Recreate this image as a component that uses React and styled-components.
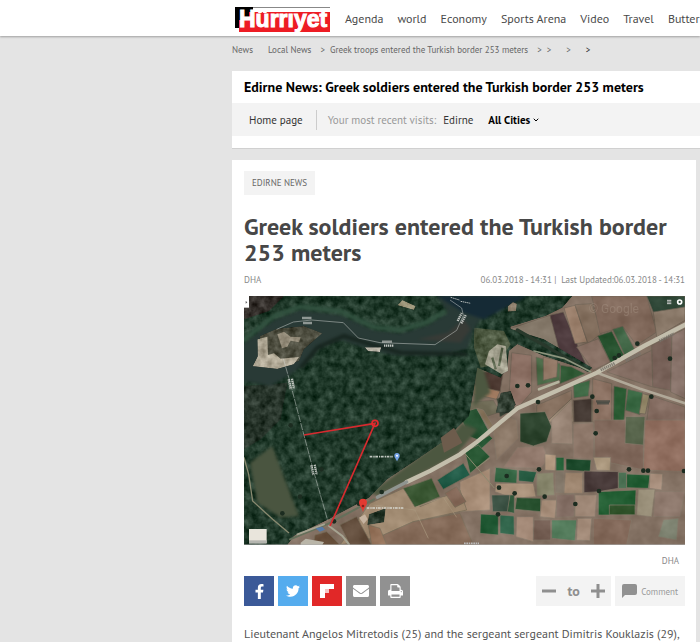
import React from 'react'
import styled, { createGlobalStyle } from 'styled-components'
import { FaFacebookF, FaTwitter, FaEnvelope } from 'react-icons/fa'
import { ChevronDown } from 'lucide-react'

const GlobalStyle = createGlobalStyle`
  * {
    box-sizing: border-box;
  }
  body {
    margin: 0;
    background: #e4e4e4;
    color: #4a4a4a;
    font-family: 'PT Sans', 'Noto Sans', sans-serif;
    overflow: hidden;
  }
  a {
    color: inherit;
    text-decoration: none;
  }
  button {
    border: 0;
    padding: 0;
    background: none;
    color: inherit;
    font: inherit;
    cursor: pointer;
  }
`

const Header = styled.header`
  height: 36px;
  padding-left: 235px;
  background: #fff;
  box-shadow: 0 1px 2px rgba(0, 0, 0, 0.3);
  overflow: hidden;
`

const Nav = styled.nav`
  display: flex;
  align-items: center;
  height: 36px;
  gap: 14px;
  font-size: 12px;
  white-space: nowrap;
`

const LogoLink = styled.a`
  display: flex;
  padding-top: 3px;
`

const Main = styled.main`
  padding-left: 232px;
`

const Breadcrumb = styled.nav`
  display: flex;
  align-items: center;
  height: 27px;
  margin-bottom: 8px;
  gap: 5px;
  font-size: 9px;
  color: #666;
  white-space: nowrap;
`

const Crumb = styled.a`
  margin-right: ${({ $wide }) => ($wide ? 10 : 4)}px;
`

const Arrow = styled.span`
  margin-right: ${({ $wide }) => ($wide ? 10 : 0)}px;
  color: ${({ $dark }) => ($dark ? '#222' : '#666')};
`

const CityCard = styled.section`
  margin-bottom: 11px;
  padding-bottom: 12px;
  border-bottom: 1px solid #d0d0d0;
  background: #fff;
`

const CityTitle = styled.h2`
  margin: 0;
  padding: 0 12px;
  font-size: 14px;
  line-height: 32px;
  color: #000;
  white-space: nowrap;
`

const CityBar = styled.div`
  display: flex;
  align-items: center;
  height: 33px;
  padding-left: 17px;
  background: #f3f3f3;
  font-size: 11px;
  color: #333;
  white-space: nowrap;
`

const HomeLink = styled.a`
  margin-right: 11px;
  padding-right: 13px;
  border-right: 1px solid #ccc;
  line-height: 20px;
`

const Visits = styled.span`
  margin-right: 7px;
  color: #999;
`

const CitiesButton = styled.button`
  display: flex;
  align-items: center;
  gap: 2px;
  margin-left: 15px;
  font-weight: 700;
  color: #000;
`

const Article = styled.article`
  margin-right: 4px;
  padding: 11px 11px 20px 12px;
  background: #fff;
`

const Tag = styled.a`
  display: block;
  width: fit-content;
  padding: 0 8px;
  background: #f3f3f3;
  font-size: 9px;
  line-height: 24px;
  color: #666;
`

const Headline = styled.h1`
  margin: 19px 0 7px;
  font-size: 24px;
  line-height: 26px;
  color: #474747;
`

const Meta = styled.div`
  display: flex;
  justify-content: space-between;
  margin-bottom: 9px;
  font-size: 9px;
  line-height: 14px;
  color: #888;
`

const Figure = styled.figure`
  margin: 0;
  svg {
    display: block;
    width: 100%;
    height: auto;
  }
`

const Caption = styled.figcaption`
  padding: 8px 6px;
  font-size: 9px;
  line-height: 15px;
  text-align: right;
  color: #888;
`

const Tools = styled.div`
  display: flex;
  justify-content: space-between;
`

const ToolGroup = styled.div`
  display: flex;
  gap: 4px;
`

const ShareButton = styled.button`
  display: flex;
  align-items: center;
  justify-content: center;
  width: 30px;
  height: 30px;
  background: ${({ $bg }) => $bg};
  color: #fff;
`

const SizeBox = styled.div`
  display: flex;
  align-items: center;
  justify-content: space-between;
  width: 75px;
  height: 30px;
  padding: 0 6px;
  background: #f3f3f3;
  font-size: 14px;
  font-weight: 700;
  color: #8f8f8f;
  button {
    display: flex;
  }
`

const CommentButton = styled.button`
  display: flex;
  align-items: center;
  gap: 4px;
  height: 30px;
  padding: 0 7px;
  background: #f3f3f3;
  font-size: 9px;
  color: #999;
`

const Paragraph = styled.p`
  margin: 18px 0 0;
  font-size: 12px;
  line-height: 20px;
  color: #555;
`

const Logo = () => (
  <svg width="96" height="26" viewBox="0 0 96 26" role="img" aria-label="Hürriyet">
    <path d="M18 .5h77" stroke="#888" />
    <path d="M4 5h91v20H4z" fill="#ed1c24" />
    <path d="M0 0h18v5h-4v8H4v8H0z" fill="#000" />
    <text
      x="4"
      y="20"
      fill="#fff"
      stroke="#fff"
      strokeWidth="1"
      fontFamily="Liberation Sans, sans-serif"
      fontWeight="700"
      fontSize="23"
    >
      Hürriyet
    </text>
  </svg>
)

const FlipboardIcon = () => (
  <svg width="14" height="14" viewBox="0 0 14 14">
    <path d="M0 0h5v14H0z" fill="#fff" />
    <path d="M5 0h9v5H5z" fill="#fff" />
    <path d="M5 5h4v4H5z" fill="#f7c4c4" />
  </svg>
)

const PrintIcon = () => (
  <svg width="15" height="14" viewBox="0 0 1664 1536" fill="#fff">
    <path d="M384 1408h896v-256H384v256zm0-640h896V384h-160q-40 0-68-28t-28-68V128H384v640zm1152 64q0-26-19-45t-45-19-45 19-19 45 19 45 45 19 45-19 19-45zm128 0v416q0 13-9.500 22.500t-22.500 9.500h-224v160q0 40-28 68t-68 28H352q-40 0-68-28t-28-68v-160H32q-13 0-22.500-9.500T0 1248V832q0-79 56.500-135.500T192 640h64V96q0-40 28-68t68-28h672q40 0 88 20t76 48l152 152q28 28 48 76t20 88v256h64q79 0 135.500 56.500T1664 832z" />
  </svg>
)

const fields = [
  // north of the crossroads
  ['#85796a', '150,110 270,70 305,180 270,185'],
  ['#4b383b', '270,70 310,60 385,235 300,185'],
  ['#9b806c', '312,48 345,40 382,150 345,155'],
  ['#84705f', '345,38 395,35 430,120 384,155'],
  ['#80685a', '395,12 560,12 590,120 530,160 490,105 420,125'],
  ['#8c7b6b', '580,60 675,30 675,85 590,135'],
  ['#2c4434', '560,12 675,12 675,45 580,60'],
  ['#877064', '350,165 415,140 450,210 400,235'],
  ['#285330', '413,132 455,118 495,196 452,212'],
  ['#426747', '458,112 488,103 528,180 496,194'],
  ['#786259', '575,160 635,130 632,295 578,285'],
  ['#88736a', '636,130 675,110 675,320 632,300'],
  ['#826c61', '440,240 575,175 578,285'],
  ['#8c7064', '155,182 215,190 215,300 180,340 145,345'],
  ['#4e6c4a', '228,195 300,215 300,265 232,280'],
  ['#927866', '250,195 293,205 290,255 250,265'],
  ['#4f3c34', '50,240 130,240 120,300 42,280'],
  ['#a17b61', '42,280 120,298 110,322 42,306'],
  ['#315a36', '302,220 335,225 375,245 300,275'],
  ['#86705f', '230,340 335,295 335,320 260,390 230,390'],
  ['#9c8873', '335,320 340,390 260,390'],
  ['#3f6945', '340,278 390,265 385,312 342,318'],
  ['#453a34', '340,325 395,320 395,390 342,390'],
  ['#8b7162', '398,260 455,275 455,390 398,390'],
  ['#2d5d35', '462,282 500,290 490,412 460,412'],
  ['#3c6a45', '504,292 548,302 540,368 496,355'],
  ['#94886a', '548,305 568,310 556,366 538,364'],
  ['#846c61', '570,310 675,345 675,390 560,390'],
  ['#6e6a55', '30,330 100,325 120,360 30,390'],
  ['#333e31', '110,320 155,305 165,350 120,375'],
]

const lowerFields = [
  ['#275232', '5,0 15,-25 50,-35 90,40 55,60 30,50'],
  ['#827058', '50,-35 70,-30 98,15 90,30'],
  ['#2a5a37', '30,82 88,46 98,55 60,90'],
  ['#857062', '-30,32 0,5 30,60 10,75'],
  ['#8c7968', '98,22 140,-10 170,0 175,55 110,120'],
  ['#2e452f', '180,-20 255,-25 275,20 260,65 220,78 180,65'],
  ['#988475', '275,0 335,-60 338,72 275,70'],
  ['#8d7769', '340,12 400,8 400,118 340,115'],
  ['#90786b', '172,82 250,78 265,120 240,145 130,142'],
  ['#81695c', '402,0 550,0 550,150 405,118'],
  ['#56634a', '497,-10 555,-10 550,75 495,70'],
  ['#916f60', '555,0 675,0 675,155 550,150'],
  ['#285733', '15,95 55,75 90,110 30,160'],
  ['#a58b75', '0,185 90,145 90,270 0,275'],
  ['#b0977f', '255,102 288,105 285,152 255,150'],
  ['#266239', '288,112 312,112 312,152 288,152'],
  ['#1d4a2c', '318,116 393,120 390,155 318,150'],
  ['#a69379', '400,112 452,112 450,152 410,150'],
  ['#30613f', '107,142 172,150 170,190 103,186'],
  ['#23573e', '176,150 230,156 220,187 176,183'],
  ['#87866c', '230,160 280,158 283,225 230,228'],
  ['#807567', '287,155 312,155 312,220 287,218'],
  ['#9c846e', '316,158 368,158 368,220 312,220'],
  ['#493b3a', '372,153 475,155 475,205 415,215 372,218'],
  ['#4d7255', '475,157 500,157 500,205 475,205'],
  ['#1f5930', '500,162 570,165 565,205 500,203'],
  ['#a68d7b', '570,160 608,162 605,210 568,205'],
  ['#ac947d', '108,190 220,190 228,230 160,235 105,215'],
  ['#3c5244', '95,225 150,225 145,275 98,275'],
  ['#31593b', '150,225 163,225 163,280 142,275'],
  ['#28512f', '170,233 242,235 242,275 165,268'],
  ['#a38a76', '245,240 290,240 285,295 240,290'],
  ['#846f65', '290,225 343,222 342,290 290,292'],
  ['#9e8776', '345,225 410,225 405,290 345,290'],
  ['#225d32', '415,215 528,210 525,285 415,285'],
  ['#2e5129', '448,255 525,255 525,284 448,284'],
  ['#9a907a', '535,208 585,208 575,290 530,285'],
  ['#8d786c', '585,215 675,215 660,290 580,290'],
  ['#225a35', '62,282 115,285 115,345 60,340'],
  ['#31654b', '120,285 162,288 163,345 120,340'],
  ['#a58b79', '170,290 220,290 220,365 168,350'],
  ['#755f54', '222,300 272,300 272,360 220,360'],
  ['#537b5b', '275,300 350,300 345,362 275,355'],
  ['#a48c7a', '352,295 395,295 390,362 350,360'],
  ['#846a5b', '400,295 515,300 500,375 400,375'],
  ['#7d8270', '610,300 655,295 650,360 595,350'],
]

const trees = [
  [140, 388], [168, 602], [115, 652], [345, 623], [413, 588], [270, 676], [232, 520],
  [882, 318], [788, 540], [812, 592], [1045, 302], [1058, 345], [1055, 412], [1180, 143],
  [1278, 188], [1222, 302], [820, 270], [852, 268], [1112, 186], [1125, 178], [762, 655],
  [1065, 585], [994, 624], [885, 520], [1155, 520], [1198, 524], [1212, 524], [902, 602],
  [765, 575], [1320, 525],
]

const SatelliteMap = () => (
  <svg viewBox="0 0 1323 747" role="img" aria-label="Satellite map of the border">
    <defs>
      <filter id="canopy" x="0" y="0" width="100%" height="100%" colorInterpolationFilters="sRGB">
        <feTurbulence type="fractalNoise" baseFrequency="0.045" numOctaves="3" seed="8" />
        <feColorMatrix values="0 1 0 0 0  0 1 0 0 0  0 1 0 0 0  0 0 0 0 1" result="noise" />
        <feComposite in="SourceGraphic" in2="noise" operator="arithmetic" k2="1" k3="0.36" k4="-0.18" />
        <feComposite in2="SourceGraphic" operator="in" />
        <feGaussianBlur stdDeviation="2" />
      </filter>
      <filter id="soil" x="0" y="0" width="100%" height="100%" colorInterpolationFilters="sRGB">
        <feGaussianBlur in="SourceGraphic" stdDeviation="2" result="blurred" />
        <feTurbulence type="fractalNoise" baseFrequency="0.02" numOctaves="3" seed="3" />
        <feColorMatrix values="0 1 0 0 0  0 1 0 0 0  0 1 0 0 0  0 0 0 0 1" result="noise" />
        <feComposite in="blurred" in2="noise" operator="arithmetic" k2="1" k3="0.14" k4="-0.07" />
      </filter>
      <filter id="soft" x="-10%" y="-10%" width="120%" height="120%" colorInterpolationFilters="sRGB">
        <feGaussianBlur stdDeviation="5" />
      </filter>
      <filter id="smudge" x="-10%" y="-10%" width="120%" height="120%" colorInterpolationFilters="sRGB">
        <feGaussianBlur stdDeviation="2" />
      </filter>
    </defs>

    <g filter="url(#soil)">
      <rect width="1323" height="747" fill="#837163" />
      <g transform="translate(648 -12)" stroke="#6b6053" strokeWidth="2">
        {fields.map(([fill, points]) => <polygon key={points} fill={fill} points={points} />)}
      </g>
      <g transform="translate(648 372)" stroke="#85796a" strokeWidth="2">
        {lowerFields.map(([fill, points]) => <polygon key={points} fill={fill} points={points} />)}
      </g>
      <g transform="translate(-12 372)" stroke="#756d59" strokeWidth="2">
        <polygon points="390,250 490,205 540,260 660,210 680,270 520,305 420,350 300,375" fill="#a08a71" />
        <polygon points="430,345 520,305 660,280 700,375 420,375" fill="#846a58" />
        <polygon points="490,205 575,175 600,230 525,262" fill="#3b5834" />
        <polygon points="592,180 670,130 690,165 610,208" fill="#1f5945" />
        <polygon points="615,220 650,200 678,245 645,262" fill="#866a5a" />
        <polygon points="300,315 350,290 395,375 330,375" fill="#65503f" />
        <polygon points="385,315 420,325 440,375 395,375" fill="#94725a" />
        <polygon points="225,345 260,335 300,375 220,375" fill="#6a523e" />
        <path d="M400 255l125 15 40 85M525 262l85-30 40 60" fill="none" stroke="#a8977d" strokeWidth="2" />
      </g>
    </g>

    <path
      d="M690 120L690 330 640 400 530 480 380 590 400 600 520 540 640 475 700 400 650 380 700 320 740 290z"
      fill="#4c5740"
      filter="url(#soft)"
    />
    <g filter="url(#canopy)">
      <path
        d="M0 0H985L955 35 905 60 800 92 800 98 900 130 1045 215 1035 225 900 180 820 145 795 165 790 210 770 245 700 215 688 290 675 360 600 435 520 490 430 550 375 605 250 672 150 720 130 747H0z"
        fill="#213a2b"
      />
      <path d="M0 0h120L75 45 0 70z" fill="#342f2b" />
      <path d="M0 270l130-10-20 110-60 60-50 30z" fill="#27342a" />
      <path d="M375 655l50-18-5 42-50 8z" fill="#28382b" />
      <path d="M770 290l30-5 15 40-15 25-45 0z" fill="#303d31" />
      <path d="M690 95l90 10 20 40-40 60-50 10-20-60z" fill="#4b573f" />
      <path d="M735 165l25-20 25 5 8 75-20 10-50-30z" fill="#a3a18f" />
      <path d="M745 185l10 35M775 155l-10 55" stroke="#59644c" strokeWidth="7" />
    </g>
    <path d="M18 500L85 450 115 530 165 660 110 665 40 620z" fill="#4a5540" filter="url(#soft)" />
    <path d="M590 425L630 395 655 440 600 470z" fill="#6d5c4c" filter="url(#smudge)" />

    <path
      d="M-5 145L88 72 168 42 290 56 390 102 470 112 550 88 610 50 580 0H820L710 70 690 100 670 160 590 178 440 176 370 158 290 132 228 153 188 198 138 238 80 270-5 255z"
      fill="#293a36"
      filter="url(#soft)"
    />
    <path d="M580 0H850L720 70 660 50z" fill="#152a35" filter="url(#soft)" />
    <path d="M170 215l50-60 80-35 80 25 90 25 200 5" fill="none" stroke="#17251f" strokeWidth="12" filter="url(#soft)" />
    <path d="M-5 135L88 62 168 32 290 46 390 94 470 102 550 78 605 45" fill="none" stroke="#325240" strokeWidth="14" filter="url(#soft)" />
    <path d="M520 130l90-20 50-40 20 30-30 40z" fill="#473c37" opacity="0.5" filter="url(#soft)" />
    <g filter="url(#canopy)">
      <path d="M48 120L98 98 180 90 235 112 180 160 165 195 105 215 28 208 45 180z" fill="#4d4d3f" />
      <path d="M40 130l30-8 2 55 18-5 20 16 55-5-15 22-50 14-74-8 15-30z" fill="#b0a895" />
      <path d="M100 115l20-8 20 15 30 2-5 15-25-5-10 18-16 5z" fill="#928a78" />
      <path d="M362 154l50 0-4 14-36-2z" fill="#bbb7aa" />
      <path d="M475 12l40 18-5 12-50-14z" fill="#9b9478" />
      <path d="M792 30l15-12 12 5-3 22-25 2z" fill="#817360" />
    </g>

    <g fill="none" strokeLinecap="round" filter="url(#smudge)">
      <path d="M820 102l107 61 105 60" stroke="#29392c" strokeWidth="10" />
      <path d="M870 165l90 22 80 40" stroke="#8d947d" strokeWidth="5" />
      <path d="M1059 230L1188 278 1323 322" stroke="#b0a898" strokeWidth="8" />
      <path d="M1335 80L1200 150 1059 230 930 288 820 337 768 380 700 437 648 475 560 524 488 558" stroke="#c3beac" strokeWidth="13" />
      <path d="M488 558L400 604" stroke="#8f9590" strokeWidth="10" />
      <path d="M390 610L255 682 138 730" stroke="#65705b" strokeWidth="6" />
      <path d="M885 280l58-22" stroke="#b5b49f" strokeWidth="8" />
      <path d="M0 485l14 50 12 80 60 55 48 40" stroke="#8a8a70" strokeWidth="4" />
      <path d="M255 690l40 30 20 25M160 715l80-30" stroke="#a5a391" strokeWidth="6" />
      <path d="M665 475l85 100M736 487l-40 30" stroke="#8d8a70" strokeWidth="3" />
    </g>
    <path d="M170 740l15-12 55 10-5 9h-65z" fill="#b9b5a8" filter="url(#smudge)" />
    <path d="M345 665l18-10 8 15-12 14z" fill="#c5b3a0" filter="url(#smudge)" />
    <path d="M215 697l20-5 8 9-16 6z" fill="#567ba8" />
    <g fill="#1c2c20" filter="url(#smudge)">
      {trees.map(([cx, cy]) => <circle key={`${cx}-${cy}`} cx={cx} cy={cy} r="7" />)}
    </g>

    <g fill="none" stroke="#d9ddda" strokeWidth="2" opacity="0.7">
      <path d="M98 100l50-22 55-6 95 8 45 46 65 14 165 6 65-43 20-45-5-22-35-24" />
      <path d="M118 188l20 70 30 115 40 150 43 150" strokeDasharray="22 3" />
    </g>
    <g stroke="#dedfdb" strokeWidth="7" strokeDasharray="4 2" opacity="0.85">
      <path d="M175 66h27M178 81h26M415 137h28M420 149h28" />
      <path d="M134 250l6 30M144 248l6 30M202 508l6 30M212 506l6 30" />
      <path d="M641 75l12-24M652 82l14-26" />
      <path d="M620 4l26 8M650 16l30 6" strokeWidth="3" />
      <path d="M1070 222l42-20M1145 194l45-22M1246 135l44-22" stroke="#77736b" strokeWidth="9" />
      <path d="M1057 316h40M1060 322h36" stroke="#273733" />
    </g>
    <text x="1034" y="50" fill="#b4a394" opacity="0.3" fontFamily="Roboto, sans-serif" fontSize="36">© Google</text>

    <path d="M180 417L393 382 258 690" fill="none" stroke="#d62b2f" strokeWidth="5" />
    <circle cx="393" cy="382" r="9" fill="none" stroke="#e52a2c" strokeWidth="5" />
    <path d="M357 649c-2-14-12-19-12-29a12 12 0 0 1 24 0c0 10-10 15-12 29z" fill="#e33a31" />
    <circle cx="357" cy="630" r="4" fill="#851f19" />
    <path d="M377 482h70M368 636h112" stroke="#dee1dc" strokeWidth="5" strokeDasharray="8 3 4 2" opacity="0.85" />
    <circle cx="459" cy="479" r="8" fill="#75a3e6" />
    <path d="M459 496l-7-13h14z" fill="#75a3e6" />
    <circle cx="459" cy="479" r="3" fill="#fff" />

    <path d="M0 0h15v35H0z" fill="#fff" />
    <path d="M5 15l5 4-5 4z" fill="#555" />
    <path d="M15 699h53v42H15z" fill="#e9e5dc" />
    <path d="M15 733h53v10H15z" fill="#b5b6b0" />
    <path d="M1269 13h13M1269 18h13M1269 23h13" stroke="#ccc" strokeWidth="3" />
    <circle cx="1307" cy="18" r="6" fill="none" stroke="#fff" strokeWidth="5" />
    <path d="M660 742h45" stroke="#bbb" strokeWidth="5" strokeDasharray="5 2" />
    <path d="M0 746h1323" stroke="#aaa" strokeWidth="2" />
  </svg>
)

const sections = ['Agenda', 'world', 'Economy', 'Sports Arena', 'Video', 'Travel', 'Butter']

const App = () => (
  <>
    <GlobalStyle />
    <Header>
      <Nav>
        <LogoLink href="#"><Logo /></LogoLink>
        {sections.map(name => <a key={name} href="#">{name}</a>)}
      </Nav>
    </Header>
    <Main>
      <Breadcrumb aria-label="Breadcrumb">
        <Crumb href="#" $wide>News</Crumb>
        <Crumb href="#">Local News</Crumb>
        <Arrow>&gt;</Arrow>
        <Crumb href="#">Greek troops entered the Turkish border 253 meters</Crumb>
        <Arrow>&gt;</Arrow>
        <Arrow $wide>&gt;</Arrow>
        <Arrow $wide>&gt;</Arrow>
        <Arrow $dark>&gt;</Arrow>
      </Breadcrumb>
      <CityCard>
        <CityTitle>Edirne News: Greek soldiers entered the Turkish border 253 meters</CityTitle>
        <CityBar>
          <HomeLink href="#">Home page</HomeLink>
          <Visits>Your most recent visits:</Visits>
          <a href="#">Edirne</a>
          <CitiesButton type="button">
            All Cities
            <ChevronDown size={8} strokeWidth={3} />
          </CitiesButton>
        </CityBar>
      </CityCard>
      <Article>
        <Tag href="#">EDIRNE NEWS</Tag>
        <Headline>Greek soldiers entered the Turkish border 253 meters</Headline>
        <Meta>
          <span>DHA</span>
          <span>06.03.2018 - 14:31 | &nbsp;Last Updated:06.03.2018 - 14:31</span>
        </Meta>
        <Figure>
          <SatelliteMap />
          <Caption>DHA</Caption>
        </Figure>
        <Tools>
          <ToolGroup>
            <ShareButton type="button" $bg="#3b5998" aria-label="Facebook"><FaFacebookF size={15} /></ShareButton>
            <ShareButton type="button" $bg="#55acee" aria-label="Twitter"><FaTwitter size={14} /></ShareButton>
            <ShareButton type="button" $bg="#e12828" aria-label="Flipboard"><FlipboardIcon /></ShareButton>
            <ShareButton type="button" $bg="#919191" aria-label="E-mail"><FaEnvelope size={16} /></ShareButton>
            <ShareButton type="button" $bg="#919191" aria-label="Print"><PrintIcon /></ShareButton>
          </ToolGroup>
          <ToolGroup>
            <SizeBox>
              <button type="button" aria-label="Smaller text">
                <svg width="14" height="14"><path d="M0 7h14" stroke="#8f8f8f" strokeWidth="3" /></svg>
              </button>
              to
              <button type="button" aria-label="Larger text">
                <svg width="14" height="14"><path d="M0 7h14M7 0v14" stroke="#8f8f8f" strokeWidth="3" /></svg>
              </button>
            </SizeBox>
            <CommentButton type="button">
              <svg width="15" height="14" viewBox="0 0 15 14">
                <path d="M2 0h11a2 2 0 0 1 2 2v7a2 2 0 0 1-2 2H3l-3 3V2a2 2 0 0 1 2-2z" fill="#919191" />
              </svg>
              Comment
            </CommentButton>
          </ToolGroup>
        </Tools>
        <Paragraph>Lieutenant Angelos Mitretodis (25) and the sergeant sergeant Dimitris Kouklazis (29),</Paragraph>
      </Article>
    </Main>
  </>
)

export default App
